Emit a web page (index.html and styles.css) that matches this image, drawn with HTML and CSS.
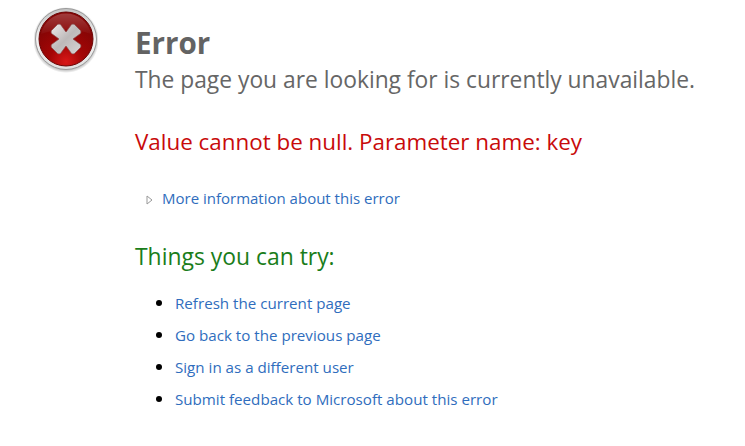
FILE: index.html
```
<!DOCTYPE html>
<html lang="en">
<head>
<meta charset="utf-8">
<title>Error</title>
<link rel="stylesheet" href="styles.css">
</head>
<body>
<div class="page">
  <svg class="icon" width="64" height="66" viewBox="0 0 64 66">
    <defs>
      <radialGradient id="red" cx="50%" cy="92%" r="70%">
        <stop offset="0" stop-color="#d81818"/>
        <stop offset="0.45" stop-color="#a30606"/>
        <stop offset="1" stop-color="#860505"/>
      </radialGradient>
      <linearGradient id="ring" x1="0" y1="0" x2="0" y2="1">
        <stop offset="0" stop-color="#c4c4c4"/>
        <stop offset="0.5" stop-color="#f4f4f4"/>
        <stop offset="1" stop-color="#e0e0e0"/>
      </linearGradient>
      <linearGradient id="gloss" x1="0" y1="0" x2="0" y2="1">
        <stop offset="0" stop-color="#ffffff" stop-opacity="0.22"/>
        <stop offset="1" stop-color="#ffffff" stop-opacity="0.03"/>
      </linearGradient>
      <linearGradient id="cross" x1="0" y1="0" x2="1" y2="1">
        <stop offset="0" stop-color="#eeeaea"/>
        <stop offset="0.5" stop-color="#bdb9b9"/>
        <stop offset="1" stop-color="#d8d5d5"/>
      </linearGradient>
      <radialGradient id="shade" cx="50%" cy="50%" r="50%">
        <stop offset="0.9" stop-color="#000" stop-opacity="0.25"/>
        <stop offset="1" stop-color="#000" stop-opacity="0"/>
      </radialGradient>
    </defs>
    <circle cx="32" cy="33" r="33" fill="url(#shade)"/>
    <circle cx="32" cy="32" r="30.5" fill="url(#ring)" stroke="#9a9a9a" stroke-width="1"/>
    <circle cx="32" cy="32" r="27" fill="url(#red)" stroke="#6a0404" stroke-width="1"/>
    <path d="M7 27 A25.5 25.5 0 0 1 57 27 Q32 18 7 27 Z" fill="url(#gloss)"/>
    <path d="M17.5 23.5 L23.5 17.5 Q25 16.5 26.5 17.5 L32 25 L37.5 17.5 Q39 16.5 40.5 17.5 L46.5 23.5 Q47.5 25 46.5 26.5 L39 32 L46.5 37.5 Q47.5 39 46.5 40.5 L40.5 46.5 Q39 47.5 37.5 46.5 L32 39 L26.5 46.5 Q25 47.5 23.5 46.5 L17.5 40.5 Q16.5 39 17.5 37.5 L25 32 L17.5 26.5 Q16.5 25 17.5 23.5 Z" fill="url(#cross)" stroke="#8a4a4a" stroke-width="0.7"/>
  </svg>
  <main class="content">
    <h1 class="title">Error</h1>
    <p class="subtitle">The page you are looking for is currently unavailable.</p>
    <p class="message">Value cannot be null. Parameter name: key</p>
    <div class="more">
      <svg class="arrow" width="7" height="10" viewBox="0 0 7 10"><path d="M1 1 L6 5 L1 9 Z" fill="none" stroke="#999" stroke-width="1"/></svg>
      <a class="link" href="#">More information about this error</a>
    </div>
    <h2 class="try">Things you can try:</h2>
    <ul class="actions">
      <li><a class="link" href="#">Refresh the current page</a></li>
      <li><a class="link" href="#">Go back to the previous page</a></li>
      <li><a class="link" href="#">Sign in as a different user</a></li>
      <li><a class="link" href="#">Submit feedback to Microsoft about this error</a></li>
    </ul>
  </main>
</div>
</body>
</html>
```
FILE: styles.css
```
html, body { margin: 0; padding: 0; background: #fff; }
body { font-family: "Open Sans", "Noto Sans", "DejaVu Sans", sans-serif; overflow: hidden; }
.page { display: flex; align-items: flex-start; padding: 7px 0 0 34px; }
.icon { flex: none; }
.content { margin-left: 37px; }
.title { margin: 0; padding-top: 16px; font-size: 29.6px; line-height: 40px; font-weight: 700; color: #636363; }
.subtitle { margin: 1px 0 0; font-size: 22.8px; line-height: 31px; color: #666; }
.message { margin: 31px 0 0; font-size: 22.4px; line-height: 32px; color: #c80a0a; }
.more { display: flex; align-items: center; margin: 29px 0 0 11px; font-size: 15px; line-height: 22px; }
.arrow { flex: none; margin-right: 9px; margin-top: 3px; }
.link { color: #2f6dbd; text-decoration: none; }
.try { margin: 32px 0 0; font-size: 22.9px; line-height: 32px; font-weight: 400; color: #1a7d1a; }
.actions { margin: 13px 0 0; padding: 0 0 0 40px; font-size: 15.15px; line-height: 32px; }
.actions li { height: 32px; }
.actions li::marker { font-size: 18px; }
```
